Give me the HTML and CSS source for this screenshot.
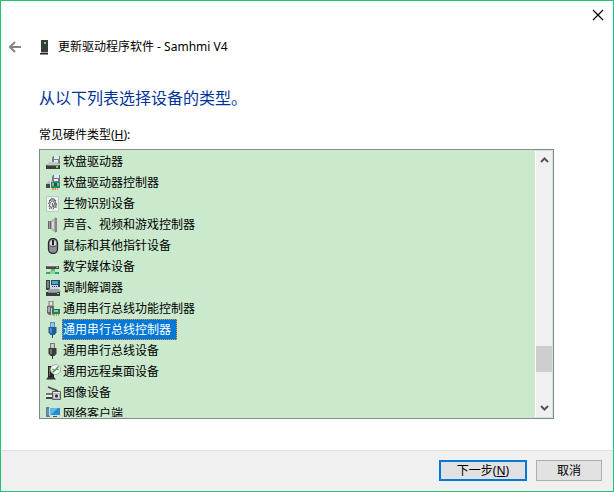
FILE: index.html
```html
<!DOCTYPE html>
<html lang="zh-CN">
<head>
  <meta charset="utf-8">
  <title>更新驱动程序软件 - Samhmi V4</title>
  <link rel="stylesheet" href="styles.css">
</head>
<body>
  <form class="window">
    <div class="titlebar">
      <button type="button" class="close" aria-label="关闭">
        <svg width="12" height="12" viewBox="0 0 12 12"><path d="M1 1l10 10M11 1L1 11" stroke="#000" stroke-width="1.2"/></svg>
      </button>
    </div>

    <div class="header">
      <button type="button" class="back" aria-label="返回">
        <svg width="12" height="12" viewBox="0 0 12 12"><path d="M6 1L1 6l5 5M1 6h11" fill="none" stroke="#848484" stroke-width="2"/></svg>
      </button>
      <svg class="device" width="10" height="16" viewBox="0 0 10 16">
        <path d="M2 1h7v12H2z" fill="#3c3c3c"/>
        <path d="M2 13h7v1H2z" fill="#aaa"/>
        <path d="M1 14h8v1.500H1z" fill="#222"/>
        <path d="M5 3h2v2H5z" fill="#3f4"/>
      </svg>
      <span>更新驱动程序软件 - Samhmi V4</span>
    </div>

    <div class="content">
      <h1>从以下列表选择设备的类型。</h1>
      <div class="list-label" id="list-label">常见硬件类型(<u>H</u>):</div>

      <div class="listbox">
        <ul class="list" role="radiogroup" aria-labelledby="list-label">
          <li><label><input type="radio" name="type">
            <svg class="icon" viewBox="0 0 16 16">
              <path d="M7 2h7v8H6V4z" fill="#7d828a"/><path d="M8 2h5v3H8z" fill="#dfe8f4"/><path d="M8 6h4v3H8z" fill="#e8e8e8"/>
              <path d="M3 8h8l3 3H0z" fill="#c4c4c4"/><path d="M0 11h14v4H0z" fill="#3c3c3c"/><path d="M1 11h12v1H1z" fill="#777"/><path d="M10 12h2v2h-2z" fill="#3f4"/>
            </svg><span>软盘驱动器</span></label></li>
          <li><label><input type="radio" name="type">
            <svg class="icon" viewBox="0 0 16 16">
              <path d="M7 0h7v7H6V2z" fill="#747a85"/><path d="M8 0h5v3H8z" fill="#dce9f7"/><path d="M8 4h4v2H8z" fill="#eee"/>
              <path d="M3 6h4v3H0z" fill="#bbb"/><path d="M0 9h5v4H0z" fill="#484848"/>
              <path d="M5 7h9v6H5z" fill="#23886b"/><path d="M6 8h7v3H6z" fill="#65c19c"/><path d="M8 8h3v3H8z" fill="#275849"/>
              <path d="M4 5h1v10H4z" fill="#ddd"/><path d="M6 13h2v2H6zM8.500 13h1.500v2H8.500zM11 13h1v2h-1z" fill="#f39a1c"/>
            </svg><span>软盘驱动器控制器</span></label></li>
          <li><label><input type="radio" name="type">
            <svg class="icon" viewBox="0 0 16 16">
              <path d="M.5.5h12v15H.5z" fill="#edf2f1" stroke="#b7cdca"/>
              <path d="M3 5q3.500-5 7 0M2.500 8q1-4.500 4-4.500T10.500 9M3 11q1-6 3.500-6T9 12M5 13q2-3 1.500-6M7 13.500q1.500-2 0-5M3.500 13l1-3M10 7v5" fill="none" stroke="#555" stroke-width=".9"/>
            </svg><span>生物识别设备</span></label></li>
          <li><label><input type="radio" name="type">
            <svg class="icon" viewBox="0 0 16 16">
              <path d="M2 4h3v8H2z" fill="#666"/><path d="M3 4h1v8H3z" fill="#999"/><path d="M5 4l5-4v16l-5-4z" fill="#a8a8a8"/><path d="M6 5l2-2v10l-2-2z" fill="#d8d8d8"/><path d="M9 1h2v14H9z" fill="#858585"/>
            </svg><span>声音、视频和游戏控制器</span></label></li>
          <li><label><input type="radio" name="type">
            <svg class="icon" viewBox="0 0 16 16">
              <rect x="2.500" y=".5" width="9" height="15" rx="4.500" fill="#8c9096" stroke="#292b2f" stroke-width="1.300"/>
              <path d="M4 7V4l2-2v6zM8 2l2 2v3L8 8z" fill="#d6d9dd"/><path d="M7 2v5" stroke="#222" stroke-width="2"/><path d="M4 8q3 2 6 0" fill="none" stroke="#555"/>
            </svg><span>鼠标和其他指针设备</span></label></li>
          <li><label><input type="radio" name="type">
            <svg class="icon" viewBox="0 0 16 16">
              <path d="M2 4h9l2 3H0z" fill="#dfe4e1"/><path d="M0 7h13v3H0z" fill="#454947"/><path d="M1 7h11v1H1z" fill="#777"/><path d="M10 8h2v1h-2z" fill="#3f4"/>
              <path d="M5 10h4v3H5z" fill="#58ba81"/><path d="M0 13h13v2H0z" fill="#35a367"/><path d="M4 12h5v3H4z" fill="#80d5a0"/>
            </svg><span>数字媒体设备</span></label></li>
          <li><label><input type="radio" name="type">
            <svg class="icon" viewBox="0 0 16 16">
              <path d="M0 0h4v10H0z" fill="#3b4147"/><path d="M1 1h2v7H1z" fill="#78828b"/><path d="M5 0h9v7H5z" fill="#244a66"/><path d="M6 1h6v3H6z" fill="#50a6d5"/>
              <path d="M5 5h7v4H5z" fill="#ccd4db"/><path d="M6 6h1v1H6zM8 6h1v1H8zM10 6h1v1h-1z" fill="#345"/>
              <path d="M3 9h10l2 3H1z" fill="#9da3a8"/><path d="M0 12h14v4H0z" fill="#393d42"/><path d="M2 12h9v1H2z" fill="#888"/><path d="M11 13h2v1h-2z" fill="#4ef06a"/>
            </svg><span>调制解调器</span></label></li>
          <li><label><input type="radio" name="type">
            <svg class="icon" viewBox="0 0 16 16">
              <path d="M3 0h4v5H3z" fill="#ddd" stroke="#777"/><path d="M1 5h7v7l-2 2H3l-2-2z" fill="#666"/><path d="M2 6h2v5H2z" fill="#aaa"/>
              <path d="M6 8h8v5H6z" fill="#267d60"/><path d="M8 9h4v2H8z" fill="#7dceaa"/><path d="M5 7h1v8H5z" fill="#ccc"/><path d="M7 13h2v2H7zM10 13h1v2h-1zM12 13h1v2h-1z" fill="#d39b38"/>
            </svg><span>通用串行总线功能控制器</span></label></li>
          <li><label><input type="radio" name="type" checked>
            <svg class="icon" viewBox="0 0 16 16">
              <path d="M4 0h5v5H4z" fill="#5a8db5"/><path d="M5 1h3v4H5z" fill="#9cc3de"/><path d="M2.500 5h8v5.500L8.500 13h-4l-2-2.500z" fill="#225d91"/><path d="M4 6h2v5H4z" fill="#478fc6"/><path d="M6 13h1v3H6z" fill="#174c7a"/>
            </svg><span>通用串行总线控制器</span></label></li>
          <li><label><input type="radio" name="type">
            <svg class="icon" viewBox="0 0 16 16">
              <path d="M4 0h5v5H4z" fill="#777"/><path d="M5 1h3v4H5z" fill="#ccc"/><path d="M2.500 5h8v5.500L8.500 13h-4l-2-2.500z" fill="#3b3b3b"/><path d="M4 6h2v5H4z" fill="#707070"/><path d="M6 13h1v3H6z" fill="#333"/>
            </svg><span>通用串行总线设备</span></label></li>
          <li><label><input type="radio" name="type">
            <svg class="icon" viewBox="0 0 16 16">
              <path d="M2 2h6v11H2z" fill="#222"/><path d="M3 3h1v9H3z" fill="#666"/><path d="M0 15.500L2 13h6l2 2.500z" fill="#333"/>
              <circle cx="9.500" cy="5.500" r="5" fill="#f3f6f3" stroke="#93a093" stroke-width=".8"/><path d="M6.500 5l2 1.500-2 2M12.500 2.500l-2 2 2 1.500M8.500 7l2.500-3" fill="none" stroke="#459b50" stroke-width="1.200"/>
            </svg><span>通用远程桌面设备</span></label></li>
          <li><label><input type="radio" name="type">
            <svg class="icon" viewBox="0 0 16 16">
              <path d="M2 2l10 4" stroke="#444" stroke-width="1.500"/><path d="M0 8h7v2H0z" fill="#777"/><path d="M0 10h8v3H1z" fill="#e8ecec"/><path d="M0 12h7v2H0z" fill="#444"/>
              <path d="M6.500 6.500h8v8h-8z" fill="#b4b8b8" stroke="#5c5c5c"/><path d="M7 7h7v1H7z" fill="#e5e5e5"/><circle cx="10.500" cy="11" r="2.500" fill="#eee"/><circle cx="10.500" cy="11" r="1.700" fill="#333"/>
            </svg><span>图像设备</span></label></li>
          <li><label><input type="radio" name="type">
            <svg class="icon" viewBox="0 0 16 16">
              <path d="M0 1h4v10H0z" fill="#777"/><path d="M3.500 1.500h11v8h-11z" fill="#268dca" stroke="#d3dde2"/><path d="M4 2h8L5 9H4z" fill="#59bce9"/><path d="M7 10h4v1H7zM5 11h8v1H5z" fill="#555"/>
              <path d="M1 3h2v6H1z" fill="#3d9fd1"/>
            </svg><span>网络客户端</span></label></li>
        </ul>
        <div class="scrollbar">
          <button type="button" aria-label="向上">
            <svg width="9" height="8" viewBox="0 0 9 8"><path d="M1 6l3.500-3.500L8 6" fill="none" stroke="#555" stroke-width="2"/></svg>
          </button>
          <div class="track"><div class="thumb"></div></div>
          <button type="button" aria-label="向下">
            <svg width="9" height="8" viewBox="0 0 9 8"><path d="M1 2l3.500 3.500L8 2" fill="none" stroke="#555" stroke-width="2"/></svg>
          </button>
        </div>
      </div>
    </div>

    <div class="footer">
      <button type="button" class="btn btn-next">下一步(<u>N</u>)</button>
      <button type="button" class="btn btn-cancel">取消</button>
    </div>
  </form>
</body>
</html>
```
FILE: styles.css
```css
* {
  box-sizing: border-box;
}

body {
  margin: 0;
  font-family: "Noto Sans", "Noto Sans CJK SC", sans-serif;
  font-size: 12px;
  line-height: 18px;
  color: #000;
}

button {
  padding: 0;
  border: none;
  background: none;
  font: inherit;
  color: inherit;
}

svg {
  display: block;
  flex-shrink: 0;
}

.window {
  display: flex;
  flex-direction: column;
  height: 100vh;
  border: 1px solid #20c274;
  background-color: #fff;
}

.titlebar {
  display: flex;
  justify-content: flex-end;
  height: 30px;
}

.close {
  display: flex;
  align-items: center;
  justify-content: center;
  width: 30px;
  height: 28px;
}

.header {
  display: flex;
  align-items: center;
  height: 31px;
  padding-left: 8px;
}

.header span {
  line-height: 20px;
}

.device {
  margin-left: 18px;
  margin-right: 9px;
}

.content {
  display: flex;
  flex-direction: column;
  flex: 1;
  min-height: 0;
  padding: 24px 59px 31px 38px;
}

h1 {
  margin: 0 0 16px;
  font-size: 16px;
  font-weight: normal;
  line-height: 24px;
  color: #003399;
}

.list-label {
  margin-bottom: 5px;
}

.listbox {
  display: flex;
  flex: 1;
  min-height: 0;
  padding: 1px;
  border: 1px solid #828790;
  background-color: #cae9cd;
}

.list {
  flex: 1;
  margin: 0;
  padding: 0;
  overflow: hidden;
  list-style: none;
}

.list label {
  display: flex;
  align-items: center;
  height: 21px;
  padding-left: 5px;
}

.list input {
  appearance: none;
  width: 0;
  height: 0;
  margin: 0;
  outline: none;
}

.icon {
  width: 16px;
  height: 16px;
}

.list span {
  height: 21px;
  padding: 0 5px 0 0;
  border: 1px solid transparent;
  line-height: 19px;
}

.list input:checked ~ span {
  border: 1px dotted #ff8728;
  background-color: #0078d7;
  color: #fff;
}

.scrollbar {
  display: flex;
  flex-direction: column;
  width: 17px;
  border-left: 1px solid #fff;
  background-color: #f0f0f0;
}

.scrollbar button {
  display: flex;
  align-items: center;
  justify-content: center;
  height: 18px;
}

.track {
  display: flex;
  flex-direction: column;
  justify-content: flex-end;
  flex: 1;
  padding-bottom: 27px;
}

.thumb {
  height: 26px;
  background-color: #cdcdcd;
}

.footer {
  display: flex;
  align-items: flex-start;
  justify-content: flex-end;
  gap: 9px;
  height: 41px;
  padding: 9px 11px 0 0;
  border-top: 1px solid #dfdfdf;
  background-color: #f0f0f0;
}

.btn {
  height: 21px;
  border: 1px solid #adadad;
  background-color: #e1e1e1;
  line-height: 17px;
}

.btn-next {
  width: 88px;
  border: 2px solid #0078d7;
}

.btn-cancel {
  width: 66px;
}
```
